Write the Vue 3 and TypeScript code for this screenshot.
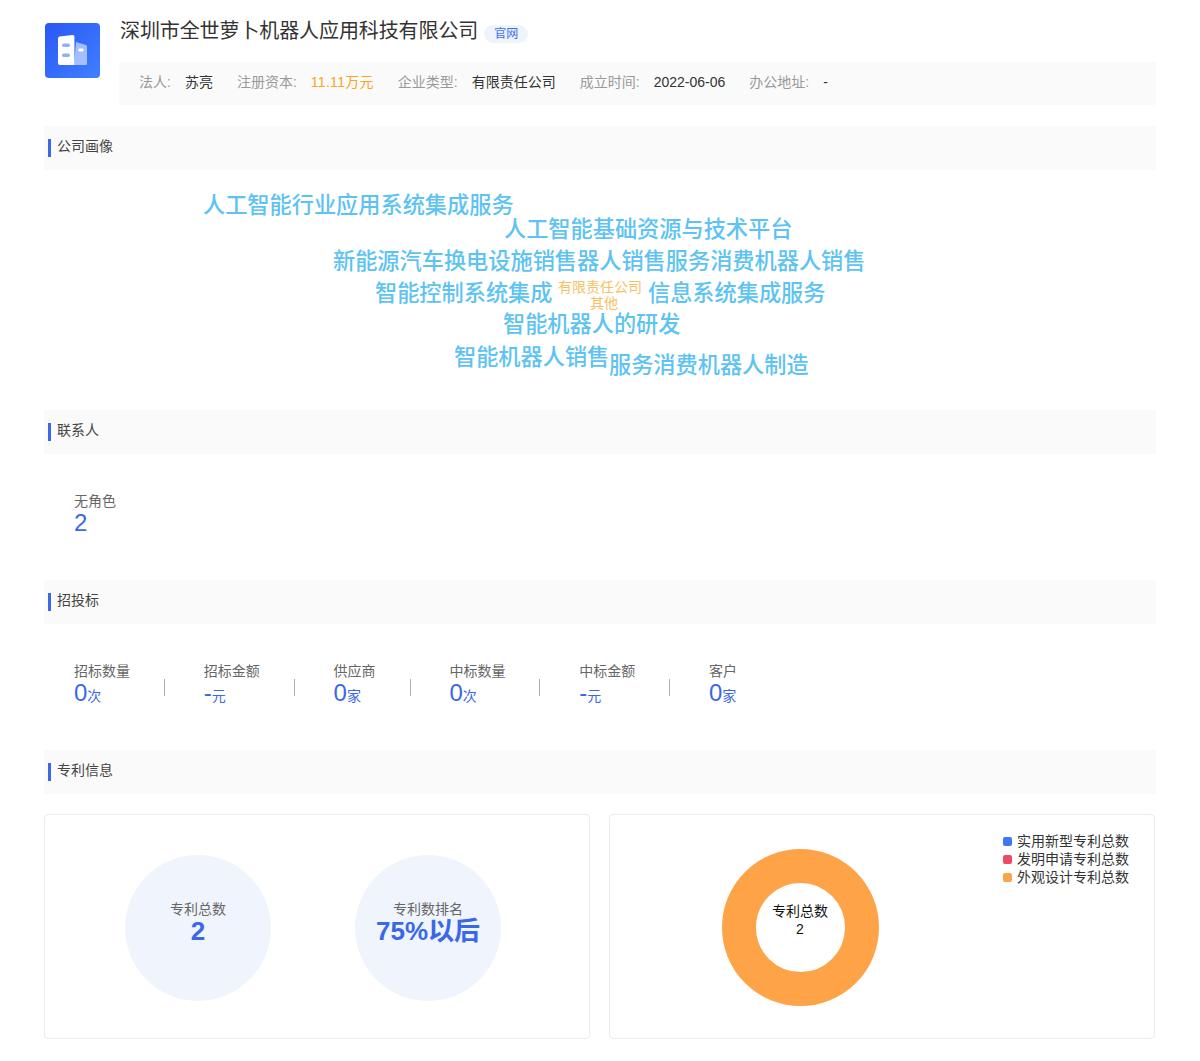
<script setup lang="ts">
interface Pair { label: string; value: string; accent?: boolean }
interface Word { text: string; x: number; y: number; size: number; orange?: boolean }
interface Stat { label: string; value: string; unit?: string }

const info: Pair[] = [
  { label: '法人:', value: '苏亮' },
  { label: '注册资本:', value: '11.11万元', accent: true },
  { label: '企业类型:', value: '有限责任公司' },
  { label: '成立时间:', value: '2022-06-06' },
  { label: '办公地址:', value: '-' },
]

const words: Word[] = [
  { text: '人工智能行业应用系统集成服务', x: 159, y: 36, size: 22.2 },
  { text: '人工智能基础资源与技术平台', x: 460, y: 60, size: 22.2 },
  { text: '新能源汽车换电设施销售器人销售服务消费机器人销售', x: 289, y: 92, size: 22.2 },
  { text: '智能控制系统集成', x: 331, y: 124, size: 22.2 },
  { text: '有限责任公司', x: 514, y: 117, size: 14, orange: true },
  { text: '其他', x: 546, y: 133, size: 14, orange: true },
  { text: '信息系统集成服务', x: 604, y: 124, size: 22.2 },
  { text: '智能机器人的研发', x: 459, y: 155, size: 22.2 },
  { text: '智能机器人销售', x: 410, y: 188, size: 22.2 },
  { text: '服务消费机器人制造', x: 565, y: 196, size: 22.2 },
]

const stats: Stat[] = [
  { label: '招标数量', value: '0', unit: '次' },
  { label: '招标金额', value: '-', unit: '元' },
  { label: '供应商', value: '0', unit: '家' },
  { label: '中标数量', value: '0', unit: '次' },
  { label: '中标金额', value: '-', unit: '元' },
  { label: '客户', value: '0', unit: '家' },
]

const legend = [
  { name: '实用新型专利总数', color: '#3f78f5' },
  { name: '发明申请专利总数', color: '#ee4a62' },
  { name: '外观设计专利总数', color: '#ffa348' },
]

function wordStyle(w: Word) {
  return { left: w.x + 'px', top: w.y - w.size / 2 - 4 + 'px', fontSize: w.size + 'px', lineHeight: w.size + 8 + 'px' }
}
</script>

<template>
  <div class="page">
    <header class="head">
      <div class="logo">
        <svg viewBox="0 0 55 55" width="55" height="55">
          <path d="M31 19L41 22a1.500 1.500 0 0 1 1 1.500V40.500a1.500 1.500 0 0 1-1.500 1.500H29z" fill="#fff" opacity="0.55" />
          <path d="M13 15.500a2 2 0 0 1 1.600-2L27.500 12a1.600 1.600 0 0 1 1.900 1.600V42H15a2 2 0 0 1-2-2z" fill="#fff" />
          <rect x="17" y="20.500" width="8" height="3.500" rx="1.750" fill="#8fb0fa" />
          <rect x="17" y="30.500" width="8" height="3.500" rx="1.750" fill="#8fb0fa" />
          <rect x="33.500" y="25.500" width="5" height="3" rx="1" fill="#fff" />
        </svg>
      </div>
      <div class="head-main">
        <div class="title-row">
          <h1 class="title">深圳市全世萝卜机器人应用科技有限公司</h1>
          <span class="badge">官网</span>
        </div>
        <div class="info">
          <div v-for="p in info" :key="p.label" class="pair">
            <span class="pair-label">{{ p.label }}</span>
            <span class="pair-value" :class="{ accent: p.accent }">{{ p.value }}</span>
          </div>
        </div>
      </div>
    </header>

    <section>
      <h2 class="sec"><span class="sec-text">公司画像</span></h2>
      <div class="cloud">
        <span v-for="w in words" :key="w.text" class="word" :class="{ orange: w.orange }" :style="wordStyle(w)">{{ w.text }}</span>
      </div>
    </section>

    <section>
      <h2 class="sec"><span class="sec-text">联系人</span></h2>
      <div class="stats contact">
        <div class="stat">
          <div class="stat-label">无角色</div>
          <div class="stat-value"><span class="num">2</span></div>
        </div>
      </div>
    </section>

    <section>
      <h2 class="sec"><span class="sec-text">招投标</span></h2>
      <div class="stats bids">
        <template v-for="(s, i) in stats" :key="s.label">
          <div class="stat">
            <div class="stat-label">{{ s.label }}</div>
            <div class="stat-value"><span class="num">{{ s.value }}</span><span class="unit">{{ s.unit }}</span></div>
          </div>
          <i v-if="i < stats.length - 1" class="divider"></i>
        </template>
      </div>
    </section>

    <section>
      <h2 class="sec"><span class="sec-text">专利信息</span></h2>
      <div class="cards">
        <div class="card circles">
          <div class="circle">
            <div class="c-label">专利总数</div>
            <div class="c-value">2</div>
          </div>
          <div class="circle">
            <div class="c-label">专利数排名</div>
            <div class="c-value">75%以后</div>
          </div>
        </div>
        <div class="card chart">
          <div class="donut">
            <svg viewBox="0 0 158 158" width="158" height="158">
              <circle cx="79.500" cy="78.500" r="61.500" fill="none" stroke="#ffa348" stroke-width="34" />
            </svg>
            <div class="donut-text">
              <div>专利总数</div>
              <div>2</div>
            </div>
          </div>
          <ul class="legend">
            <li v-for="l in legend" :key="l.name" class="legend-item">
              <i class="swatch" :style="{ background: l.color }"></i>{{ l.name }}
            </li>
          </ul>
        </div>
      </div>
    </section>
  </div>
</template>

<style scoped>
.page {
  box-sizing: border-box;
  width: 1200px;
  height: 1061px;
  padding: 0 44px;
  background: #fff;
  font-family: "Liberation Sans", "Noto Sans CJK SC", sans-serif;
  font-size: 14px;
  color: #333;
  overflow: hidden;
}
.head {
  display: flex;
  height: 126px;
}
.logo {
  width: 55px;
  height: 55px;
  margin: 23px 0 0 1px;
  border-radius: 4px;
  background: linear-gradient(135deg, #2a57f5 0%, #3f80ff 100%);
}
.head-main {
  flex: 1;
  margin-left: 19px;
}
.title-row {
  display: flex;
  align-items: center;
  height: 28px;
  margin: 17px 0 0 1px;
}
.title {
  margin: 0;
  font-size: 20px;
  font-weight: 400;
  line-height: 28px;
  letter-spacing: -0.1px;
  color: #333;
}
.badge {
  width: 44px;
  height: 18px;
  margin: 6px 0 0 6px;
  border-radius: 9px;
  background: #eef3fd;
  color: #3a6ff0;
  font-size: 12px;
  line-height: 18px;
  text-align: center;
}
.info {
  display: flex;
  align-items: center;
  gap: 24px;
  box-sizing: border-box;
  height: 43px;
  margin-top: 17px;
  padding: 0 0 4px 20px;
  background: #fafafa;
}
.pair {
  display: flex;
  gap: 14px;
  line-height: 20px;
}
.pair-label {
  color: #999;
}
.pair-value.accent {
  color: #f5a623;
  letter-spacing: 0.3px;
}
.sec {
  display: flex;
  align-items: center;
  height: 44px;
  margin: 0;
  padding-left: 4px;
  background: #fafafa;
  font-size: 14px;
  font-weight: 400;
}
.sec::before {
  content: "";
  width: 3px;
  height: 18px;
  margin: 0 6px 0 0;
  background: #3a68e8;
}
.sec-text {
  position: relative;
  top: -2px;
  line-height: 20px;
  color: #444;
}
.cloud {
  position: relative;
  height: 240px;
}
.word {
  position: absolute;
  white-space: nowrap;
  color: #5cc3f2;
  font-weight: 500;
}
.word.orange {
  color: #f6c163;
  font-weight: 400;
}
.stats {
  display: flex;
  box-sizing: border-box;
  height: 126px;
  padding: 37px 0 0 30px;
}
.stat-label {
  height: 20px;
  line-height: 20px;
  color: #666;
}
.stat-value {
  height: 28px;
  line-height: 24px;
  color: #3a68e8;
  white-space: nowrap;
}
.num {
  font-size: 24px;
}
.unit {
  font-size: 14px;
}
.divider {
  width: 1px;
  height: 17px;
  margin: 18px 38.800px 0 34px;
  background: #b0b0b0;
}
.cards {
  display: flex;
  gap: 19px;
  margin-top: 20px;
}
.card {
  box-sizing: border-box;
  width: 546px;
  height: 225px;
  border: 1px solid #ebebeb;
  border-radius: 4px;
}
.circles {
  display: flex;
  gap: 84px;
  padding: 40px 0 0 80px;
}
.circle {
  box-sizing: border-box;
  width: 146px;
  height: 146px;
  padding-top: 45px;
  border-radius: 50%;
  background: #eff4fd;
  text-align: center;
}
.c-label {
  height: 18px;
  line-height: 18px;
  color: #666;
}
.c-value {
  height: 28px;
  line-height: 27px;
  font-size: 26px;
  font-weight: 700;
  color: #3a68e8;
  white-space: nowrap;
}
.chart {
  position: relative;
  width: 546px;
}
.donut {
  position: absolute;
  left: 111px;
  top: 34px;
  width: 158px;
  height: 158px;
}
.donut-text {
  position: absolute;
  left: 0;
  right: 0;
  top: 53px;
  text-align: center;
  line-height: 18px;
  color: #111;
}
.legend {
  position: absolute;
  left: 393px;
  top: 17px;
  margin: 0;
  padding: 0;
  list-style: none;
}
.legend-item {
  display: flex;
  align-items: center;
  height: 18px;
  line-height: 18px;
  color: #333;
}
.swatch {
  width: 9px;
  height: 9px;
  margin-right: 5px;
  border-radius: 2px;
}
</style>

<style>
body { margin: 0; background: #fff; }
</style>
